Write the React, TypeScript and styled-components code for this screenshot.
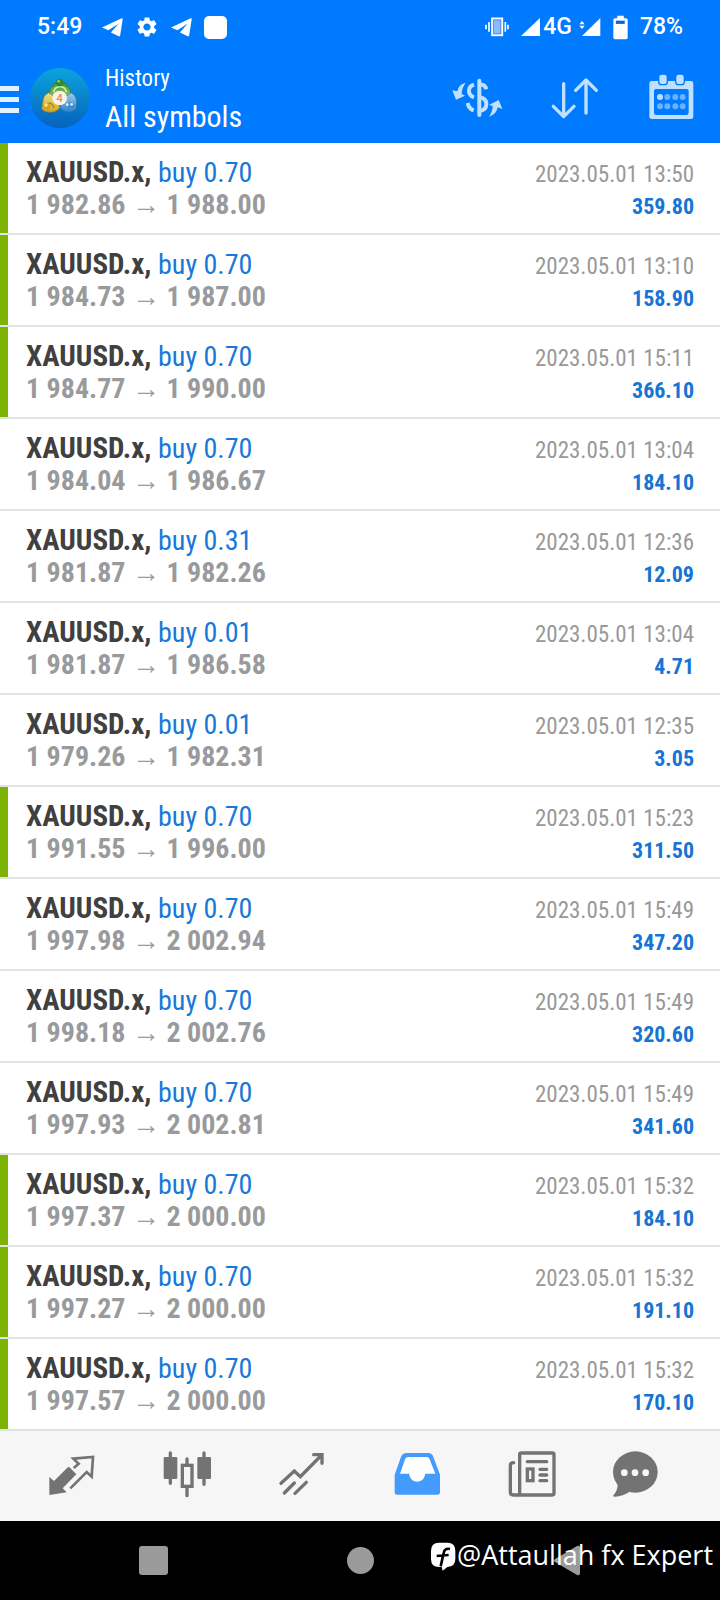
import React from "react";
import styled, { createGlobalStyle } from "styled-components";
import { MdSettings } from "react-icons/md";

const GlobalStyle = createGlobalStyle`
  * { box-sizing: border-box; }
  body { margin: 0; background: #fff; font-family: "Roboto Condensed", Roboto, sans-serif; }
  button { margin: 0; padding: 0; border: 0; background: none; cursor: pointer; }
  svg { display: block; flex: none; }
  h1, p, ul { margin: 0; padding: 0; }
`;

const Screen = styled.div`
  display: flex;
  flex-direction: column;
  min-height: 100vh;
`;

const Header = styled.header`
  background: #007aff;
  color: #fff;
`;

const StatusBar = styled.div`
  display: flex;
  align-items: center;
  justify-content: space-between;
  height: 52px;
  padding: 2px 37px 0 37px;
  font: 500 23px/28px Roboto, sans-serif;
`;

const StatusGroup = styled.div`
  display: flex;
  align-items: center;
  gap: 12px;
`;

const Clock = styled.time`
  margin-right: 8px;
`;

const NotificationDot = styled.span`
  width: 23px;
  height: 23px;
  border-radius: 5px;
  background: #fff;
`;

const Signal = styled.span`
  display: flex;
  align-items: center;
`;

const NetworkType = styled.span`
  margin: 0 7px 0 3px;
`;

const Toolbar = styled.div`
  display: flex;
  align-items: center;
  height: 91px;
`;

const MenuButton = styled.button`
  display: flex;
  flex-direction: column;
  gap: 6px;
  width: 30px;
  padding-top: 4px;
`;

const MenuBar = styled.span`
  width: 19px;
  height: 5px;
  background: #e0f2ff;
`;

const Titles = styled.div`
  flex: 1;
  padding: 2px 0 0 15px;
  white-space: nowrap;
`;

const Section = styled.p`
  font-size: 23px;
  line-height: 36px;
`;

const Title = styled.h1`
  font-size: 30px;
  font-weight: 400;
  line-height: 40px;
`;

const ToolButton = styled.button`
  display: grid;
  place-items: center;
  width: 97px;
  height: 91px;
  color: #bfe1ff;
`;

const DealList = styled.ul`
  flex: 1;
  list-style: none;
`;

const DealItem = styled.li`
  border-bottom: 2px solid #e2e2e2;
`;

const Deal = styled.div<{ $marked: boolean }>`
  display: flex;
  align-items: baseline;
  justify-content: space-between;
  height: 90px;
  padding: 13px 26px 0 18px;
  border-left: 8px solid ${(p) => (p.$marked ? "#7cb305" : "transparent")};
  line-height: 32px;
  white-space: nowrap;
`;

const DealResult = styled.div`
  text-align: right;
`;

const Symbol = styled.p`
  color: #404040;
  font-size: 29px;
  font-weight: 700;
`;

const Volume = styled.span`
  color: #1878d8;
  font-size: 28px;
  font-weight: 400;
`;

const Prices = styled.p`
  color: #999a9c;
  font-size: 28px;
  font-weight: 700;
`;

const Arrow = styled.span`
  font-family: "Liberation Sans", sans-serif;
  font-weight: 400;
`;

const DealTime = styled.time`
  display: block;
  color: #999;
  font-size: 23px;
`;

const Profit = styled.p`
  color: #1574d4;
  font-size: 22px;
  font-weight: 700;
`;

const TabBar = styled.nav`
  display: flex;
  height: 90px;
  padding: 0 39px 4px 14px;
  background: #f6f6f6;
`;

const Tab = styled.button<{ $active?: boolean; $share?: number }>`
  display: grid;
  flex: ${(p) => p.$share ?? 115} 1 0;
  place-items: center;
  color: ${(p) => (p.$active ? "#439bfd" : "#737373")};
`;

const SystemBar = styled.footer`
  position: relative;
  display: flex;
  height: 79px;
  padding: 0 50px;
  background: #000;
`;

const SystemButton = styled.button`
  display: grid;
  flex: 1;
  place-items: center;
  color: #9a9a9a;
`;

const Watermark = styled.div`
  position: absolute;
  top: 16px;
  right: 7px;
  display: flex;
  gap: 1px;
  color: #fff;
  font: 400 27px/36px "Open Sans", sans-serif;
  white-space: nowrap;
  pointer-events: none;
`;

const TelegramIcon = () => (
  <svg width="21" height="19" viewBox="0 0 66 58" fill="currentColor" aria-hidden="true">
    <path d="M0 29L62 0Q66 0 65 4L57 54Q56 58 51 56L28 45L52 17L20 38Z" />
  </svg>
);

const VibrateIcon = () => (
  <svg width="24" height="20" viewBox="168 50 72 60" fill="none" stroke="#fff" aria-hidden="true">
    <rect x="189" y="54" width="31" height="51" fill="#8cbcff" strokeWidth="5" />
    <rect x="194" y="59" width="21" height="41" stroke="#3d86ec" strokeWidth="2" />
    <path d="M180 65V94M229 65V94M171 73V87M237 73V87" strokeWidth="5" />
  </svg>
);

const SignalIcon = () => (
  <svg width="19" height="20" viewBox="279 50 57 60" fill="#fff" aria-hidden="true">
    <path d="M279 107L336 53V107Z" />
  </svg>
);

const DataSignalIcon = () => (
  <svg width="22" height="20" viewBox="449 50 66 60" fill="#fff" aria-hidden="true">
    <path d="M458 107L513 53V107Z" />
    <path d="M450 72L458 62L466 72ZM450 76L458 86L466 76Z" />
  </svg>
);

const BatteryIcon = () => (
  <svg width="15" height="25" viewBox="552 41 46 74" aria-hidden="true">
    <path d="M565 50V42H585V50H592Q597 50 597 55V109Q597 114 592 114H558Q553 114 553 109V55Q553 50 558 50Z" fill="#fff" />
    <rect x="561" y="57" width="27" height="10" fill="#1464d2" />
  </svg>
);

const Logo = () => (
  <svg width="60" height="60" viewBox="91 203 180 180" role="img" aria-label="MetaTrader 4">
    <defs>
      <linearGradient id="disc" x1="0" y1="0" x2="0" y2="1">
        <stop offset="0" stopColor="#0ba4dc" />
        <stop offset="1" stopColor="#0662bd" />
      </linearGradient>
      <linearGradient id="leaf" x1="0" y1="0" x2="0" y2="1">
        <stop offset="0" stopColor="#2f8f35" />
        <stop offset="1" stopColor="#a8d06a" />
      </linearGradient>
      <linearGradient id="gold" x1="0" y1="0" x2="0" y2="1">
        <stop offset="0" stopColor="#f0df80" />
        <stop offset="1" stopColor="#d3a624" />
      </linearGradient>
      <linearGradient id="sky" x1="0" y1="0" x2="0" y2="1">
        <stop offset="0" stopColor="#9ccbe9" />
        <stop offset="1" stopColor="#2f83cd" />
      </linearGradient>
    </defs>
    <circle cx="181" cy="293" r="90" fill="url(#disc)" />
    <path d="M181 244Q205 248 212 270Q216 284 205 297L157 297Q146 284 151 268Q158 248 181 244Z" fill="url(#leaf)" stroke="#2c6d3c" strokeWidth="2" />
    <path d="M147 277Q131 284 130 302L126 326Q136 337 155 336Q172 334 181 322L168 292Z" fill="url(#gold)" stroke="#8a7a28" strokeWidth="2" />
    <path d="M214 277Q229 284 231 302L229 326Q222 335 205 336Q187 333 181 320L194 292Z" fill="url(#sky)" stroke="#2b6fa8" strokeWidth="2" />
    <path d="M162 275Q165 259 181 259Q197 259 200 275" fill="none" stroke="#d8ebb0" strokeWidth="5" />
    <circle cx="180" cy="247" r="11" fill="#2d8a33" />
    <circle cx="177" cy="243" r="4" fill="#8fcc7a" />
    <circle cx="141" cy="318" r="11" fill="#d1a51d" />
    <circle cx="139" cy="314" r="5" fill="#f9ec9f" />
    <path d="M147 308Q160 308 162 322" fill="none" stroke="#776a28" strokeWidth="3" />
    <circle cx="213" cy="317" r="11" fill="#3b8ed4" />
    <circle cx="216" cy="312" r="4" fill="#e4f5ff" />
    <circle cx="203" cy="313" r="4" fill="#e4f5ff" />
    <circle cx="180" cy="293" r="22" fill="#f7f3ec" />
    <text x="180" y="306" textAnchor="middle" fontFamily="Roboto" fontWeight="500" fontSize="35" fill="#f08a52">4</text>
  </svg>
);

const CurrencyIcon = () => (
  <svg width="52" height="52" viewBox="65 214 156 156" fill="none" stroke="currentColor" strokeWidth="12" aria-hidden="true">
    <path d="M147 240V343" strokeLinecap="round" />
    <path d="M131 252Q115 257 116 272Q117 285 131 290M112 307Q116 325 130 329M147 252Q164 250 168 266M147 290Q168 293 168 310Q168 329 147 331" />
    <path d="M106 246Q84 251 81 272L66 269L77 297L104 285L94 280Q94 262 106 246ZM176 348Q187 333 187 316L176 313L205 298L216 325L202 320Q200 340 176 348Z" fill="currentColor" stroke="none" />
  </svg>
);

const SortIcon = () => (
  <svg width="52" height="52" viewBox="355 214 156 156" fill="none" stroke="currentColor" strokeWidth="10" strokeLinecap="round" strokeLinejoin="round" aria-hidden="true">
    <path d="M399 249V347M368 317L399 348L430 317M466 337V239M435 269L466 238L497 269" />
  </svg>
);

const CalendarIcon = () => (
  <svg width="52" height="52" viewBox="647 216 156 156" fill="currentColor" aria-hidden="true">
    <path fillRule="evenodd" d="M664 243H782Q789 243 789 250V349Q789 357 781 357H665Q657 357 657 349V250Q657 243 664 243ZM677 267Q671 267 671 273V338Q671 345 678 345H768Q775 345 775 338V273Q775 267 769 267Z" />
    <rect x="685" y="222" width="26" height="32" rx="9" stroke="#007aff" strokeWidth="4" />
    <rect x="736" y="222" width="26" height="32" rx="9" stroke="#007aff" strokeWidth="4" />
    <circle cx="689" cy="291" r="9" />
    <g opacity="0.55">
      <circle cx="711" cy="291" r="9" />
      <circle cx="735" cy="291" r="9" />
      <circle cx="757" cy="291" r="9" />
      <circle cx="689" cy="319" r="9" />
      <circle cx="711" cy="319" r="9" />
      <circle cx="735" cy="319" r="9" />
      <circle cx="757" cy="319" r="9" />
    </g>
  </svg>
);

const QuotesIcon = () => (
  <svg width="48" height="48" viewBox="146 90 144 144" fill="none" stroke="currentColor" strokeWidth="8" aria-hidden="true">
    <path d="M150 171L164 183L204 143Q208 139 212 143L231 163L190 205L202 217L150 225Z" fill="currentColor" stroke="none" />
    <path d="M223 144L238 131L222 116L281 111L277 170L262 156L213 205" />
  </svg>
);

const ChartIcon = () => (
  <svg width="48" height="48" viewBox="490 90 144 144" fill="none" stroke="currentColor" strokeWidth="10" strokeLinecap="round" aria-hidden="true">
    <path d="M512 99V190M613 99V193M562 117V131M562 205V227" />
    <rect x="492" y="111" width="41" height="66" rx="4" fill="currentColor" stroke="none" />
    <rect x="593" y="111" width="41" height="66" rx="4" fill="currentColor" stroke="none" />
    <rect x="548" y="136" width="29" height="63" />
  </svg>
);

const TradeIcon = () => (
  <svg width="48" height="48" viewBox="836 90 144 144" fill="none" stroke="currentColor" strokeWidth="10" strokeLinecap="round" aria-hidden="true">
    <path d="M845 190L885 153L903 170L967 105M943 104H968V130M855 219L885 189M887 220L921 187" />
  </svg>
);

const HistoryIcon = () => (
  <svg width="48" height="48" viewBox="100 90 144 144" aria-hidden="true">
    <path d="M121 161L136 118Q138 111 146 111H200Q208 111 210 118L227 161H196V166A24 24 0 0 1 149 166V161Z" fill="#fff" />
    <path fillRule="evenodd" fill="currentColor" d="M105 164L125 108Q130 99 139 99H206Q216 99 220 108L241 164V216Q241 224 233 224H113Q105 224 105 216ZM121 161L136 118Q138 111 146 111H200Q208 111 210 118L227 161H196V166A24 24 0 0 1 149 166V161Z" />
  </svg>
);

const NewsIcon = () => (
  <svg width="48" height="48" viewBox="447 90 144 144" fill="none" stroke="currentColor" strokeWidth="10" strokeLinecap="round" aria-hidden="true">
    <rect x="482" y="99" width="103" height="126" rx="5" />
    <path d="M464 128Q454 128 454 137V216Q454 225 463 225H482" />
    <path d="M505 125H563M543 148H563M543 165H563M543 182H563" />
    <rect x="505" y="147" width="17" height="35" />
  </svg>
);

const ChatIcon = () => (
  <svg width="48" height="48" viewBox="756 90 144 144" fill="currentColor" aria-hidden="true">
    <ellipse cx="829" cy="156" rx="67" ry="62" />
    <path d="M776 190Q777 212 763 226Q761 231 768 230Q792 228 812 215Z" />
    <g fill="#f6f6f6">
      <circle cx="796" cy="158" r="10" />
      <circle cx="828" cy="158" r="10" />
      <circle cx="860" cy="158" r="10" />
    </g>
  </svg>
);

const RecentIcon = () => (
  <svg width="29" height="29" fill="currentColor" aria-hidden="true">
    <rect width="29" height="29" rx="3" />
  </svg>
);

const HomeIcon = () => (
  <svg width="27" height="27" viewBox="0 0 54 54" fill="currentColor" aria-hidden="true">
    <circle cx="27" cy="27" r="27" />
  </svg>
);

const BackIcon = () => (
  <svg width="27" height="31" viewBox="0 0 27 31" fill="currentColor" aria-hidden="true">
    <path d="M24 1Q27 0 27 3V28Q27 31 24 30L2 17Q0 16 2 14Z" />
  </svg>
);

const BadgeIcon = () => (
  <svg width="26" height="36" viewBox="215 352 78 108" aria-hidden="true">
    <path d="M242 369H267Q291 369 291 393V418Q291 441 267 442L253 453L250 442H242Q218 442 218 418V393Q218 369 242 369Z" fill="#fff" />
    <path d="M275 388Q259 384 256 400L247 440M235 409L271 406" fill="none" stroke="#000" strokeWidth="8" />
  </svg>
);

type DealRow = { volume: string; open: string; close: string; time: string; profit: string; marked?: boolean };

const deals: DealRow[] = [
  { volume: "0.70", open: "1 982.86", close: "1 988.00", time: "13:50", profit: "359.80", marked: true },
  { volume: "0.70", open: "1 984.73", close: "1 987.00", time: "13:10", profit: "158.90", marked: true },
  { volume: "0.70", open: "1 984.77", close: "1 990.00", time: "15:11", profit: "366.10", marked: true },
  { volume: "0.70", open: "1 984.04", close: "1 986.67", time: "13:04", profit: "184.10" },
  { volume: "0.31", open: "1 981.87", close: "1 982.26", time: "12:36", profit: "12.09" },
  { volume: "0.01", open: "1 981.87", close: "1 986.58", time: "13:04", profit: "4.71" },
  { volume: "0.01", open: "1 979.26", close: "1 982.31", time: "12:35", profit: "3.05" },
  { volume: "0.70", open: "1 991.55", close: "1 996.00", time: "15:23", profit: "311.50", marked: true },
  { volume: "0.70", open: "1 997.98", close: "2 002.94", time: "15:49", profit: "347.20" },
  { volume: "0.70", open: "1 998.18", close: "2 002.76", time: "15:49", profit: "320.60" },
  { volume: "0.70", open: "1 997.93", close: "2 002.81", time: "15:49", profit: "341.60" },
  { volume: "0.70", open: "1 997.37", close: "2 000.00", time: "15:32", profit: "184.10", marked: true },
  { volume: "0.70", open: "1 997.27", close: "2 000.00", time: "15:32", profit: "191.10", marked: true },
  { volume: "0.70", open: "1 997.57", close: "2 000.00", time: "15:32", profit: "170.10", marked: true },
];

export default function App() {
  return (
    <Screen>
      <GlobalStyle />
      <Header>
        <StatusBar>
          <StatusGroup>
            <Clock>5:49</Clock>
            <TelegramIcon />
            <MdSettings size={24} />
            <TelegramIcon />
            <NotificationDot />
          </StatusGroup>
          <StatusGroup>
            <VibrateIcon />
            <Signal>
              <SignalIcon />
              <NetworkType>4G</NetworkType>
              <DataSignalIcon />
            </Signal>
            <BatteryIcon />
            <span>78%</span>
          </StatusGroup>
        </StatusBar>
        <Toolbar>
          <MenuButton aria-label="Menu">
            <MenuBar />
            <MenuBar />
            <MenuBar />
          </MenuButton>
          <Logo />
          <Titles>
            <Section>History</Section>
            <Title>All symbols</Title>
          </Titles>
          <ToolButton aria-label="Currency"><CurrencyIcon /></ToolButton>
          <ToolButton aria-label="Sort"><SortIcon /></ToolButton>
          <ToolButton aria-label="Period"><CalendarIcon /></ToolButton>
        </Toolbar>
      </Header>
      <DealList>
        {deals.map((d, i) => (
          <DealItem key={i}>
            <Deal $marked={!!d.marked}>
              <div>
                <Symbol>XAUUSD.x, <Volume>buy {d.volume}</Volume></Symbol>
                <Prices>{d.open} <Arrow>→</Arrow> {d.close}</Prices>
              </div>
              <DealResult>
                <DealTime>2023.05.01 {d.time}</DealTime>
                <Profit>{d.profit}</Profit>
              </DealResult>
            </Deal>
          </DealItem>
        ))}
      </DealList>
      <TabBar>
        <Tab aria-label="Quotes"><QuotesIcon /></Tab>
        <Tab aria-label="Chart"><ChartIcon /></Tab>
        <Tab aria-label="Trade"><TradeIcon /></Tab>
        <Tab aria-label="History" $active><HistoryIcon /></Tab>
        <Tab aria-label="News"><NewsIcon /></Tab>
        <Tab aria-label="Messages" $share={92}><ChatIcon /></Tab>
      </TabBar>
      <SystemBar>
        <SystemButton aria-label="Recent apps"><RecentIcon /></SystemButton>
        <SystemButton aria-label="Home"><HomeIcon /></SystemButton>
        <SystemButton aria-label="Back"><BackIcon /></SystemButton>
        <Watermark>
          <BadgeIcon />
          <span>@Attaullah fx Expert</span>
        </Watermark>
      </SystemBar>
    </Screen>
  );
}
